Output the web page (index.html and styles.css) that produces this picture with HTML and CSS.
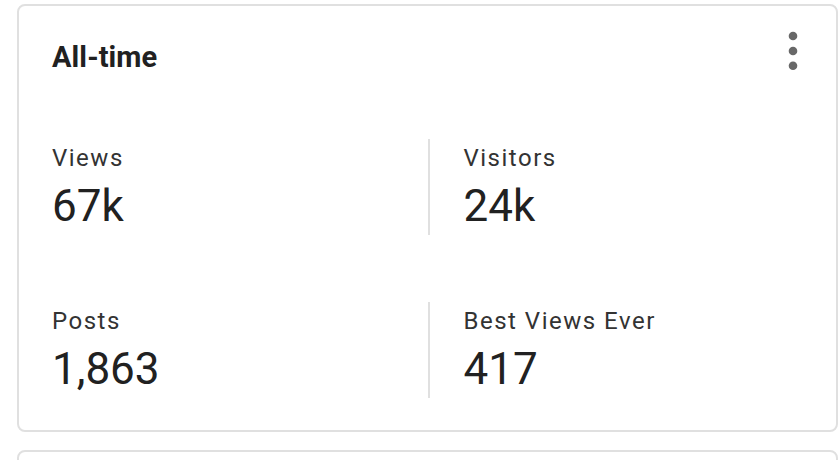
FILE: index.html
```html
<!DOCTYPE html>
<html lang="en">
<head>
    <meta charset="UTF-8">
    <meta name="viewport" content="width=device-width, initial-scale=1.0">
    <title>Stats</title>
    <link rel="stylesheet" href="styles.css">
</head>
<body>
    <div class="page">
        <div class="card">
            <div class="card-header">
                <h2 class="card-title">All-time</h2>
                <button class="menu-btn" aria-label="More">
                    <svg width="20" height="48" viewBox="0 0 20 48">
                        <circle cx="10" cy="9" r="4.3" fill="#686868"/>
                        <circle cx="10" cy="24" r="4.3" fill="#686868"/>
                        <circle cx="10" cy="38.7" r="4.3" fill="#686868"/>
                    </svg>
                </button>
            </div>
            <div class="stats">
                <div class="stat">
                    <div class="stat-label">Views</div>
                    <div class="stat-value">67k</div>
                </div>
                <div class="stat">
                    <div class="stat-label">Visitors</div>
                    <div class="stat-value">24k</div>
                </div>
                <div class="stat">
                    <div class="stat-label">Posts</div>
                    <div class="stat-value">1,863</div>
                </div>
                <div class="stat">
                    <div class="stat-label">Best Views Ever</div>
                    <div class="stat-value">417</div>
                </div>
            </div>
        </div>
        <div class="card next-card"></div>
    </div>
</body>
</html>
```

FILE: styles.css
```css
body {
    margin: 0;
    font-family: Roboto, "Noto Sans", sans-serif;
    background-color: #fff;
    color: #212121;
}

.page {
    height: 460px;
    box-sizing: border-box;
    overflow: hidden;
    padding: 4px 2px 0 17px;
}

.card {
    border: 2px solid #e0e0e0;
    border-radius: 8px;
    padding: 21px 33px 32px;
    background-color: #fff;
}

.next-card {
    margin-top: 18px;
    height: 60px;
}

.card-header {
    display: flex;
    justify-content: space-between;
    align-items: flex-start;
}

.card-title {
    margin: 12px 0 0;
    font-size: 29px;
    line-height: 36px;
    font-weight: 700;
    letter-spacing: 0.1px;
    color: #212121;
}

.menu-btn {
    border: none;
    background: none;
    padding: 0;
    display: block;
    cursor: pointer;
}

.menu-btn svg {
    display: block;
}

.stats {
    display: grid;
    grid-template-columns: 1fr 1fr;
    row-gap: 67px;
    margin-top: 64px;
}

.stat:nth-child(even) {
    border-left: 2px solid #e0e0e0;
    padding-left: 34px;
}

.stat-label {
    font-size: 24px;
    line-height: 38px;
    letter-spacing: 1.5px;
    color: #333;
}

.stat-value {
    font-size: 44px;
    line-height: 58px;
    color: #212121;
}
```
